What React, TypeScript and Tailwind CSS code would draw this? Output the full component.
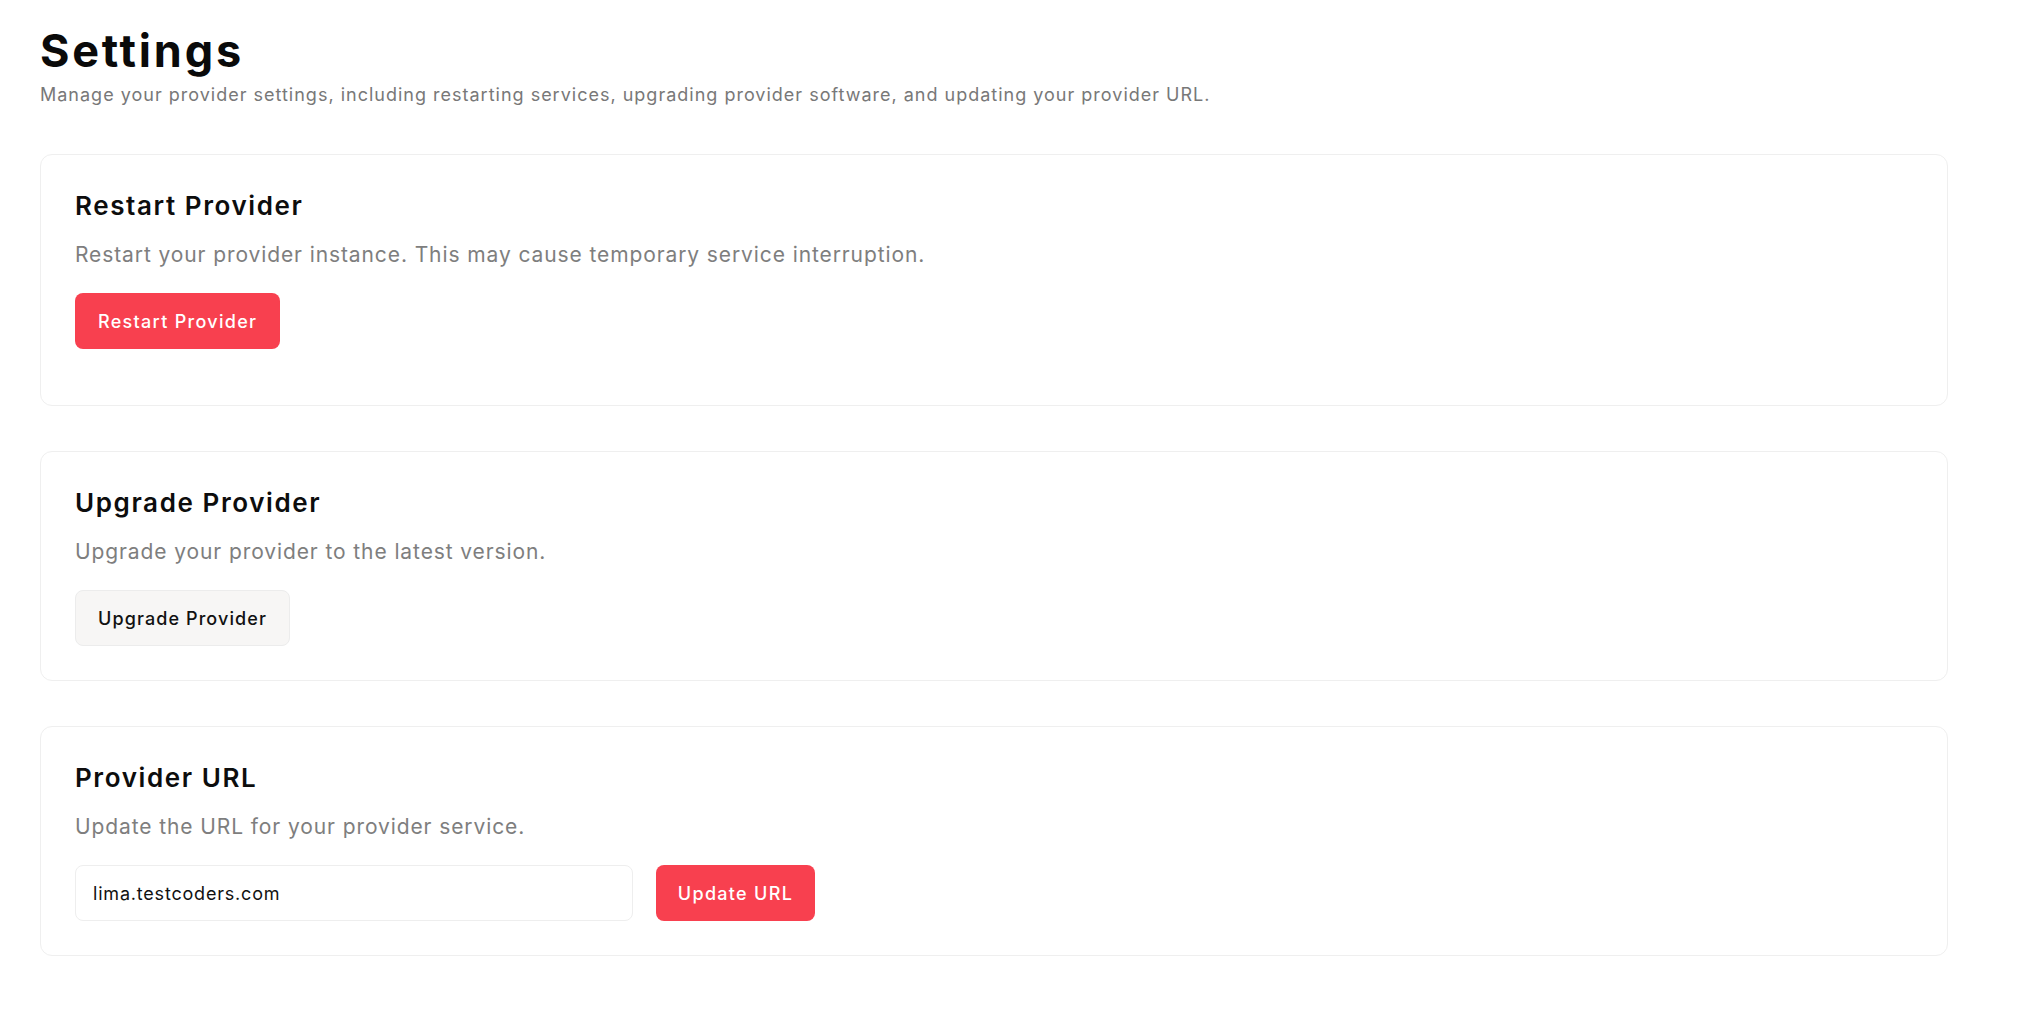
import { useState } from "react";

const font = { fontFamily: "Inter, 'Liberation Sans', sans-serif" };

function Card({ title, description, children, extra = "pb-[34px]" }: { title: string; description: string; children: React.ReactNode; extra?: string }) {
  return (
    <section className={`w-[1908px] rounded-xl border border-[#efefef] bg-white px-[34px] pt-[34px] ${extra}`}>
      <h2 className="text-[26px] leading-[34px] font-semibold tracking-[1.6px] text-[#0d0d0d]">{title}</h2>
      <p className="mt-[18px] text-[21px] leading-[28px] tracking-[0.9px] text-[#7e7e7e]">{description}</p>
      <div className="mt-[24px] flex items-center gap-[23px]">{children}</div>
    </section>
  );
}

export default function App() {
  const [url, setUrl] = useState("lima.testcoders.com");

  return (
    <div className="min-h-screen bg-white pl-[40px] pt-[28px] pb-[60px]" style={font}>
      {/* Header */}
      <h1 className="text-[45px] leading-none font-bold tracking-[2.8px] text-[#0a0a0a]">Settings</h1>
      <p className="mt-[10px] text-[18px] leading-[24px] tracking-[1px] text-[#787878]">
        Manage your provider settings, including restarting services, upgrading provider software, and updating your provider URL.
      </p>

      <div className="mt-[47px] flex flex-col gap-[45px]">
        <Card
          title="Restart Provider"
          description="Restart your provider instance. This may cause temporary service interruption."
          extra="pb-[56px]"
        >
          <button className="h-[56px] rounded-lg bg-[#f8404f] px-[23px] text-[18px] font-medium tracking-[1.3px] text-white">
            Restart Provider
          </button>
        </Card>

        <Card title="Upgrade Provider" description="Upgrade your provider to the latest version.">
          <button className="h-[56px] rounded-lg border border-[#ececec] bg-[#f7f6f5] px-[22px] text-[18px] font-medium tracking-[1.1px] text-[#111111]">
            Upgrade Provider
          </button>
        </Card>

        <Card title="Provider URL" description="Update the URL for your provider service.">
          <input
            value={url}
            onChange={(e) => setUrl(e.target.value)}
            className="h-[56px] w-[558px] rounded-lg border border-[#eeeeee] px-[17px] text-[18px] tracking-[0.8px] text-[#111111] outline-none"
          />
          <button className="h-[56px] w-[159px] rounded-lg bg-[#f8404f] text-[18px] font-medium tracking-[1.3px] text-white">
            Update URL
          </button>
        </Card>
      </div>
    </div>
  );
}
